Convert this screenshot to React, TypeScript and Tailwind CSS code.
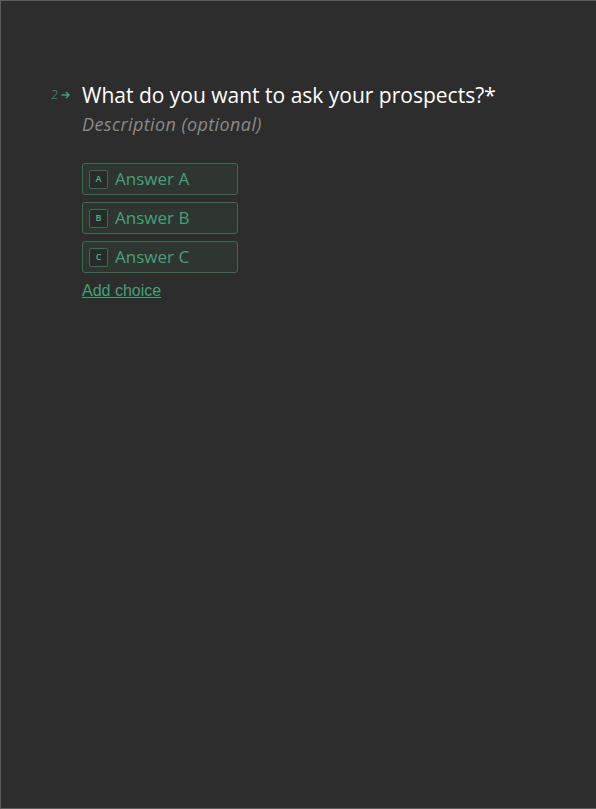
import React from "react";

const choices = ["A", "B", "C"];

export default function App() {
  return (
    <div className="w-[596px] h-[809px] bg-[#2d2d2d] border-t border-l border-b border-[#5c5c5c] overflow-hidden" style={{ fontFamily: '"Open Sans", sans-serif' }}>
      <div className="pt-[79px] pl-[50px]">
        <div className="flex items-start">
          <div className="w-[31px] flex items-center gap-[3px] pt-[8px] text-[13px] leading-none font-light text-[#3f9f78]">
            <span>2</span>
            <svg width="10" height="8" viewBox="0 0 10 8"><path d="M1 4h7M5.5 1.5L8 4 5.5 6.5" stroke="#3f9f78" strokeWidth="1.5" fill="none" strokeLinecap="round" strokeLinejoin="round" /></svg>
          </div>
          <div className="flex flex-col">
            <div className="text-[21px] leading-[30px] text-white">What do you want to ask your prospects?*</div>
            <div className="mt-[2px] text-[18px] leading-[24px] tracking-[0.4px] italic text-[#8a8a8a]">Description (optional)</div>
            <div className="mt-[27px] flex flex-col gap-[7px]">
              {choices.map((c) => (
                <div key={c} className="w-[156px] h-[32px] rounded-[3px] border border-[#3c6b54] bg-[#2f3632] flex items-center pl-[6px] gap-[7px]">
                  <div className="w-[19px] h-[19px] rounded-[2px] border border-[#3c6b54] bg-[#272b29] flex items-center justify-center text-[9px] font-semibold text-[#52b088]">{c}</div>
                  <span className="text-[17px] text-[#45a07a]">Answer {c}</span>
                </div>
              ))}
            </div>
            <a className="mt-[8px] text-[16px] leading-[20px] underline text-[#45a07a]" style={{ fontFamily: '"Liberation Sans", Arial, sans-serif' }}>Add choice</a>
          </div>
        </div>
      </div>
    </div>
  );
}
